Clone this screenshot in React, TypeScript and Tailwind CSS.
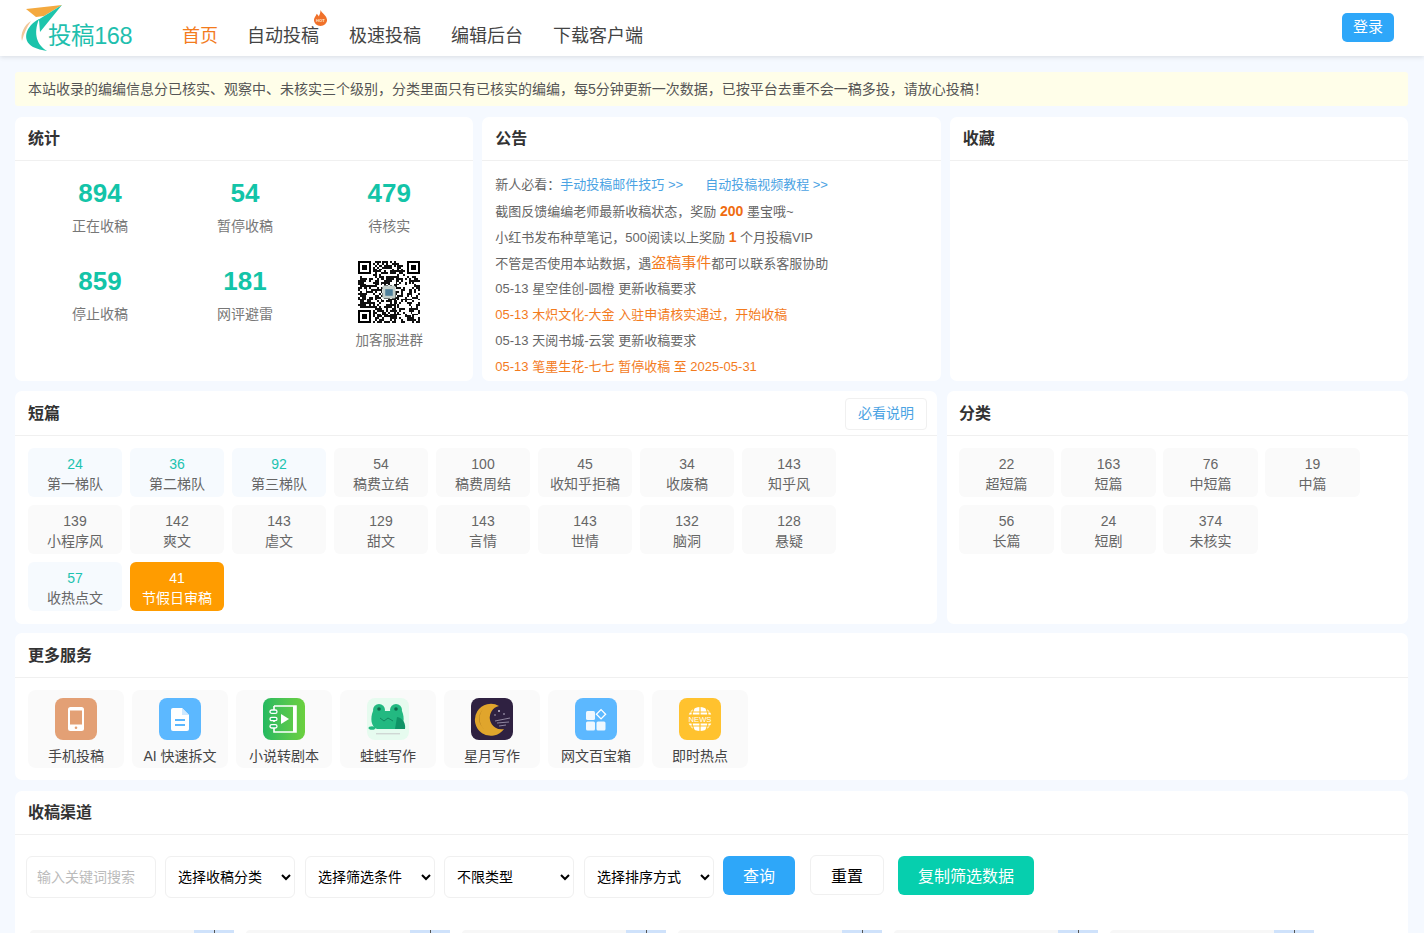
const FONT = 'font-["Liberation_Sans","Noto_Sans_CJK_SC",sans-serif]';

const navItems = ['首页', '自动投稿', '极速投稿', '编辑后台', '下载客户端'];

const stats = [
  { value: '894', label: '正在收稿' },
  { value: '54', label: '暂停收稿' },
  { value: '479', label: '待核实' },
  { value: '859', label: '停止收稿' },
  { value: '181', label: '网评避雷' },
];

const shortTiles = [
  { n: '24', t: '第一梯队', hi: true },
  { n: '36', t: '第二梯队', hi: true },
  { n: '92', t: '第三梯队', hi: true },
  { n: '54', t: '稿费立结' },
  { n: '100', t: '稿费周结' },
  { n: '45', t: '收知乎拒稿' },
  { n: '34', t: '收废稿' },
  { n: '143', t: '知乎风' },
  { n: '139', t: '小程序风' },
  { n: '142', t: '爽文' },
  { n: '143', t: '虐文' },
  { n: '129', t: '甜文' },
  { n: '143', t: '言情' },
  { n: '143', t: '世情' },
  { n: '132', t: '脑洞' },
  { n: '128', t: '悬疑' },
  { n: '57', t: '收热点文', hi: true },
  { n: '41', t: '节假日审稿', active: true },
];

const categoryTiles = [
  { n: '22', t: '超短篇' },
  { n: '163', t: '短篇' },
  { n: '76', t: '中短篇' },
  { n: '19', t: '中篇' },
  { n: '56', t: '长篇' },
  { n: '24', t: '短剧' },
  { n: '374', t: '未核实' },
];

// finder pattern + pseudo random modules for the group QR code
function QrCode() {
  const size = 33;
  const cells: [number, number][] = [];
  const inFinder = (x: number, y: number) =>
    (x < 8 && y < 8) || (x > size - 9 && y < 8) || (x < 8 && y > size - 9);
  for (let y = 0; y < size; y++) {
    for (let x = 0; x < size; x++) {
      if (inFinder(x, y)) continue;
      const h = Math.abs(Math.sin(x * 12.9898 + y * 78.233) * 43758.5453);
      if (h - Math.floor(h) < 0.52) cells.push([x, y]);
    }
  }
  const finder = (x: number, y: number) => (
    <g key={`${x}-${y}`}>
      <rect x={x} y={y} width="7" height="7" fill="#000" />
      <rect x={x + 1} y={y + 1} width="5" height="5" fill="#fff" />
      <rect x={x + 2} y={y + 2} width="3" height="3" fill="#000" />
    </g>
  );
  return (
    <svg width="62" height="62" viewBox="0 0 33 33" shapeRendering="crispEdges">
      {cells.map(([x, y]) => (
        <rect key={`${x}.${y}`} x={x} y={y} width="1" height="1" fill="#111" />
      ))}
      {finder(0, 0)}
      {finder(26, 0)}
      {finder(0, 26)}
      <rect x="13" y="13" width="7" height="7" rx="1" fill="#c3cfcb" shapeRendering="auto" />
      <rect x="14.5" y="15" width="4" height="3.5" fill="#4d7f9a" shapeRendering="auto" />
    </svg>
  );
}

function Logo() {
  return (
    <div className="flex items-end h-[50px] w-[113px] mt-[2px]">
      <svg width="46" height="50" viewBox="0 0 46 50" className="shrink-0 -mr-[18px]">
        <path d="M6 5 L42 1 L24 12 L16 13 Z" fill="#f4a93f" />
        <path d="M42 1 L20 28 L19 16 L13 19 Z" fill="#1fc5ac" />
        <path d="M19 15 C6 22 1 36 13 43 C17 45 22 46 27 47 C17 41 13 30 19 15 Z" fill="#1bc3ab" />
        <path d="M11 17 C4 21 0 30 2 37 C4 29 7 23 11 17 Z" fill="#f2c79a" />
      </svg>
      <span className="text-[23.5px] leading-[30px] mb-[3px] text-[#1fbfae] whitespace-nowrap tracking-[-0.4px]">投稿168</span>
    </div>
  );
}

function Header() {
  return (
    <header className="h-[56px] bg-white shadow-[0_1px_5px_rgba(0,0,0,0.12)] flex items-center pl-[20px] pr-[30px] relative">
      <Logo />
      <nav className="flex items-center gap-[30px] ml-[49px] mt-[16px] text-[18px] leading-[26px] text-[#444]">
        {navItems.map((item, i) => (
          <a key={item} className={`relative whitespace-nowrap ${i === 0 ? 'text-[#f37b1d] -mr-px' : ''}`}>
            {item}
            {i === 1 && (
              <svg width="15" height="16" viewBox="0 0 16 17" className="absolute -top-[13px] -right-[9px]">
                <path d="M8 0 C9 3 15 6 15 11 A7 6 0 0 1 1 11 C1 8 3 7 4 4 C5 5 6 6 6 7 C7 5 8 3 8 0 Z" fill="#f0712a" />
                <text x="8" y="13" textAnchor="middle" fontSize="4.5" fontWeight="700" fill="#ffe6d0">HOT</text>
              </svg>
            )}
          </a>
        ))}
      </nav>
      <button className="ml-auto w-[52px] h-[29px] -mt-[1px] rounded-[5px] bg-[#2ea7f9] text-white text-[15px]">登录</button>
    </header>
  );
}

function Card({ title, extra, className = '', headClass = 'h-[44px] px-[13px]', children }: { title: string; extra?: React.ReactNode; className?: string; headClass?: string; children?: React.ReactNode }) {
  return (
    <section className={`bg-white rounded-[7px] ${className}`}>
      <div className={`border-b border-[#f0f0f0] flex items-center justify-between ${headClass}`}>
        <h2 className="text-[16px] font-bold text-[#333]">{title}</h2>
        {extra}
      </div>
      {children}
    </section>
  );
}

function Tile({ n, t, hi, active, wide }: { n: string; t: string; hi?: boolean; active?: boolean; wide?: boolean }) {
  const bg = active ? 'bg-[#ff9c00] text-white' : hi ? 'bg-[#f6fafe] text-[#666]' : 'bg-[#fafafa] text-[#666]';
  return (
    <a className={`h-[49px] pt-[2px] ${wide ? 'w-[95px]' : 'w-[94px]'} rounded-[6px] flex flex-col items-center justify-center text-[14px] leading-[20px] ${bg}`}>
      <span className={hi ? 'text-[#1cc3b0]' : ''}>{n}</span>
      <span className="whitespace-nowrap">{t}</span>
    </a>
  );
}

function Stats() {
  return (
    <div className="grid grid-cols-[144px_146px_1fr] pt-[16px] px-[13px]">
      {stats.map((s) => (
        <div key={s.label} className="h-[88px] flex flex-col items-center">
          <div className="text-[26px] leading-[32px] font-bold text-[#13c4a8]">{s.value}</div>
          <div className="mt-[7px] text-[14px] leading-[20px] text-[#777]">{s.label}</div>
        </div>
      ))}
      <div className="flex flex-col items-center -mt-[4px]">
        <QrCode />
        <div className="mt-[8px] text-[13.5px] leading-[20px] text-[#777]">加客服进群</div>
      </div>
    </div>
  );
}

function Notices() {
  const lineClass = 'h-[26px] leading-[26px] whitespace-nowrap';
  return (
    <div className="px-[13px] pt-[11px] text-[13px] text-[#666]">
      <div className={lineClass}>
        新人必看：<a className="text-[#4ba3e3]">手动投稿邮件技巧 &gt;&gt;</a>
        <a className="text-[#4ba3e3] ml-[22px]">自动投稿视频教程 &gt;&gt;</a>
      </div>
      <div className={lineClass}>
        截图反馈编编老师最新收稿状态，奖励 <b className="text-[#f06c10] text-[14px]">200</b> 墨宝哦~
      </div>
      <div className={lineClass}>
        小红书发布种草笔记，500阅读以上奖励 <b className="text-[#f06c10] text-[14px]">1</b> 个月投稿VIP
      </div>
      <div className={lineClass}>
        不管是否使用本站数据，遇<span className="text-[#f37b1d] text-[15px]">盗稿事件</span>都可以联系客服协助
      </div>
      <div className={lineClass}>05-13 星空佳创-圆橙 更新收稿要求</div>
      <div className={`${lineClass} text-[#f37b1d]`}>05-13 木炽文化-大金 入驻申请核实通过，开始收稿</div>
      <div className={lineClass}>05-13 天阅书城-云裳 更新收稿要求</div>
      <div className={`${lineClass} text-[#f37b1d]`}>05-13 笔墨生花-七七 暂停收稿 至 2025-05-31</div>
    </div>
  );
}

function ServiceIcon({ index }: { index: number }) {
  const cls = 'w-[42px] h-[42px] rounded-[8px] flex items-center justify-center';
  if (index === 0) {
    return (
      <div className={`${cls} bg-[#e3a075]`}>
        <svg width="16" height="24" viewBox="0 0 16 24">
          <rect width="16" height="24" rx="2.5" fill="#fff" />
          <rect x="2" y="3.5" width="12" height="14" fill="#e3a075" />
          <circle cx="8" cy="20.8" r="1.3" fill="#e3a075" />
        </svg>
      </div>
    );
  }
  if (index === 1) {
    return (
      <div className={`${cls} bg-[#5cb8ff]`}>
        <svg width="18" height="23" viewBox="0 0 18 23">
          <path d="M2 0 H11 L18 7 V21 A2 2 0 0 1 16 23 H2 A2 2 0 0 1 0 21 V2 A2 2 0 0 1 2 0 Z" fill="#fff" />
          <path d="M11 0 V7 H18 Z" fill="#cfe9ff" />
          <rect x="4" y="11" width="10" height="2" fill="#5cb8ff" />
          <rect x="4" y="16" width="10" height="2" fill="#5cb8ff" />
        </svg>
      </div>
    );
  }
  if (index === 2) {
    return (
      <div className={`${cls} bg-gradient-to-r from-[#22b95f] to-[#6bd03e]`}>
        <svg width="30" height="32" viewBox="0 0 30 32">
          <path d="M5 3 H27 V29 H5 V25 M5 19 V14 M5 8 V3" fill="none" stroke="#fff" strokeWidth="1.6" />
          <rect x="24" y="3" width="3" height="26" fill="#fff" />
          <rect x="1" y="7" width="7" height="3.4" rx="1.7" fill="#22b95f" stroke="#fff" strokeWidth="1.3" />
          <rect x="1" y="14.3" width="7" height="3.4" rx="1.7" fill="#22b95f" stroke="#fff" strokeWidth="1.3" />
          <rect x="1" y="21.6" width="7" height="3.4" rx="1.7" fill="#22b95f" stroke="#fff" strokeWidth="1.3" />
          <path d="M12 11 L20 16 L12 21 Z" fill="#fff" />
        </svg>
      </div>
    );
  }
  if (index === 3) {
    return (
      <div className={`${cls} bg-[#e6fbef]`}>
        <svg width="40" height="36" viewBox="0 0 40 36">
          <circle cx="11" cy="9" r="6" fill="#23b981" />
          <circle cx="28" cy="9" r="6" fill="#23b981" />
          <circle cx="11" cy="8" r="1.8" fill="#0f6a4c" />
          <circle cx="28" cy="8" r="1.8" fill="#0f6a4c" />
          <path d="M5 10 H34 C37 17 36 26 30 28 H9 C3 26 2 17 5 10 Z" fill="#23b981" />
          <path d="M12 17 L16 20 L20 17 L25 20" stroke="#12875f" strokeWidth="1" fill="none" />
          <path d="M29 16 C35 17 38 23 37 28 H27 Z" fill="#0f9466" />
          <ellipse cx="4" cy="27" rx="3.5" ry="1.8" fill="#23b981" />
          <rect x="8" y="32" width="24" height="1.4" fill="#cfd8d4" />
        </svg>
      </div>
    );
  }
  if (index === 4) {
    return (
      <div className={`${cls} bg-[#2f2141]`}>
        <svg width="38" height="38" viewBox="0 0 38 38">
          <path d="M26 6 A16 16 0 1 0 31 29 A11 11 0 1 1 26 6 Z" fill="#e0a52c" />
          <path d="M10 9 A14 14 0 0 0 12 30 A15 15 0 0 1 10 9 Z" fill="#a8741c" />
          <circle cx="26" cy="11" r="1" fill="#c9c2d6" />
          <circle cx="31" cy="14" r="0.8" fill="#c9c2d6" />
          <circle cx="22" cy="15" r="0.7" fill="#c9c2d6" />
          <path d="M22 21 L37 18 M24 23 L36 22 M26 26 L33 25" stroke="#b8b0c6" strokeWidth="0.7" />
        </svg>
      </div>
    );
  }
  if (index === 5) {
    return (
      <div className={`${cls} bg-[#5cb8ff]`}>
        <svg width="22" height="24" viewBox="0 0 22 24">
          <rect x="1" y="4" width="9" height="9" rx="1.5" fill="#fff" fillOpacity="0.9" />
          <rect x="1" y="14.5" width="9" height="9" rx="1.5" fill="#fff" fillOpacity="0.9" />
          <rect x="11.5" y="14.5" width="9" height="9" rx="1.5" fill="#fff" fillOpacity="0.9" />
          <rect x="12.8" y="4" width="6.5" height="6.5" transform="rotate(45 16 7.25)" fill="none" stroke="#fff" strokeWidth="1.3" />
        </svg>
      </div>
    );
  }
  return (
    <div className={`${cls} bg-[#ffc22e]`}>
      <svg width="30" height="30" viewBox="0 0 30 30">
        <circle cx="15" cy="15" r="12" fill="#fff" />
        <path d="M15 3 V27 M9 4 C6 10 6 20 9 26 M21 4 C24 10 24 20 21 26 M4 8 H26 M4 22 H26" stroke="#ffc22e" strokeWidth="1.2" fill="none" />
        <rect x="0" y="10.5" width="30" height="9" fill="#ffc22e" />
        <text x="15" y="18" textAnchor="middle" fontSize="7.6" fill="#fff">NEWS</text>
      </svg>
    </div>
  );
}

const services = ['手机投稿', 'AI 快速拆文', '小说转剧本', '蛙蛙写作', '星月写作', '网文百宝箱', '即时热点'];

const filterSelects = [
  ['选择收稿分类', 'w-[130px]'],
  ['选择筛选条件', 'w-[130px] ml-[10px]'],
  ['不限类型', 'w-[130px] ml-[9px]'],
  ['选择排序方式', 'w-[130px] ml-[10px]'],
];

function Filters() {
  return (
    <div className="flex items-start pl-[11px] pt-[21px] text-[14px]">
      <input
        placeholder="输入关键词搜索"
        className="w-[130px] h-[42px] border border-[#f0f0f0] rounded-[6px] px-[10px] outline-none placeholder:text-[#bbb]"
      />
      <div className="flex ml-[9px]">
        {filterSelects.map(([label, cls]) => (
          <select key={label} className={`${cls} h-[42px] border border-[#f0f0f0] rounded-[6px] pl-[8px] text-black bg-white`}>
            <option>{label}</option>
          </select>
        ))}
      </div>
      <button className="w-[72px] h-[39px] pt-[2px] ml-[9px] rounded-[6px] bg-[#2ea7f9] text-white text-[16px]">查询</button>
      <button className="w-[74px] h-[40px] pt-[3px] ml-[15px] -mt-px rounded-[6px] border border-[#f0f0f0] text-black text-[16px]">重置</button>
      <button className="w-[136px] h-[39px] pt-[2px] ml-[14px] rounded-[6px] bg-[#06cfae] text-white text-[16px]">复制筛选数据</button>
    </div>
  );
}

function ChannelStubs() {
  return (
    <div className="flex gap-[12px] pl-[15px] mt-[32px]">
      {[0, 1, 2, 3, 4, 5].map((i) => (
        <div key={i} className="relative w-[204px] h-[60px] bg-[#f7f7f7] rounded-t-[4px]">
          <div className="absolute right-0 top-0 w-[40px] h-[24px] bg-[#cfe2fb] flex justify-center">
            <span className="w-px h-[4px] bg-[#555]" />
          </div>
        </div>
      ))}
    </div>
  );
}

export default function App() {
  return (
    <div className={`${FONT} h-[933px] overflow-hidden bg-[#f5f9ff] text-[#333]`}>
      <Header />
      <main className="px-[15px] pt-[16px] pr-[16px]">
        <div className="h-[34px] bg-[#fffee9] rounded-[3px] pl-[13px] flex items-center text-[14px] text-[#555] whitespace-nowrap">
          本站收录的编编信息分已核实、观察中、未核实三个级别，分类里面只有已核实的编编，每5分钟更新一次数据，已按平台去重不会一稿多投，请放心投稿！
        </div>

        <div className="grid grid-cols-3 gap-[9px] mt-[11px] h-[264px]">
          <Card title="统计"><Stats /></Card>
          <Card title="公告"><Notices /></Card>
          <Card title="收藏" />
        </div>

        <div className="flex gap-[10px] mt-[10px] h-[233px]">
          <Card
            title="短篇"
            className="w-[922px]"
            headClass="h-[45px] px-[13px] pt-px"
            extra={
              <a className="h-[32px] px-[12px] flex items-center border border-[#f0f0f0] rounded-[4px] text-[14px] text-[#4ba3e3] -mr-[3px]">必看说明</a>
            }
          >
            <div className="flex flex-wrap gap-x-[8px] gap-y-[8px] pl-[13px] pt-[12px] w-[830px]">
              {shortTiles.map((t, i) => (
                <Tile key={i} {...t} />
              ))}
            </div>
          </Card>
          <Card title="分类" className="flex-1" headClass="h-[45px] px-[12px] pt-px">
            <div className="flex flex-wrap gap-x-[7px] gap-y-[8px] pl-[12px] pt-[12px] w-[420px]">
              {categoryTiles.map((t) => (
                <Tile key={t.t} {...t} wide />
              ))}
            </div>
          </Card>
        </div>

        <Card title="更多服务" className="mt-[9px] h-[147px]" headClass="h-[45px] px-[13px] pt-px">
          <div className="flex gap-[8px] pl-[13px] pt-[12px]">
            {services.map((s, i) => (
              <a key={s} className="w-[96px] h-[78px] bg-[#fafafa] rounded-[8px] flex flex-col items-center pt-[8px] text-[14px] text-[#444]">
                <ServiceIcon index={i} />
                <span className="mt-[6px] leading-[20px] whitespace-nowrap">{s}</span>
              </a>
            ))}
          </div>
        </Card>

        <Card title="收稿渠道" className="mt-[11px] h-[200px]">
          <Filters />
          <ChannelStubs />
        </Card>
      </main>
    </div>
  );
}
